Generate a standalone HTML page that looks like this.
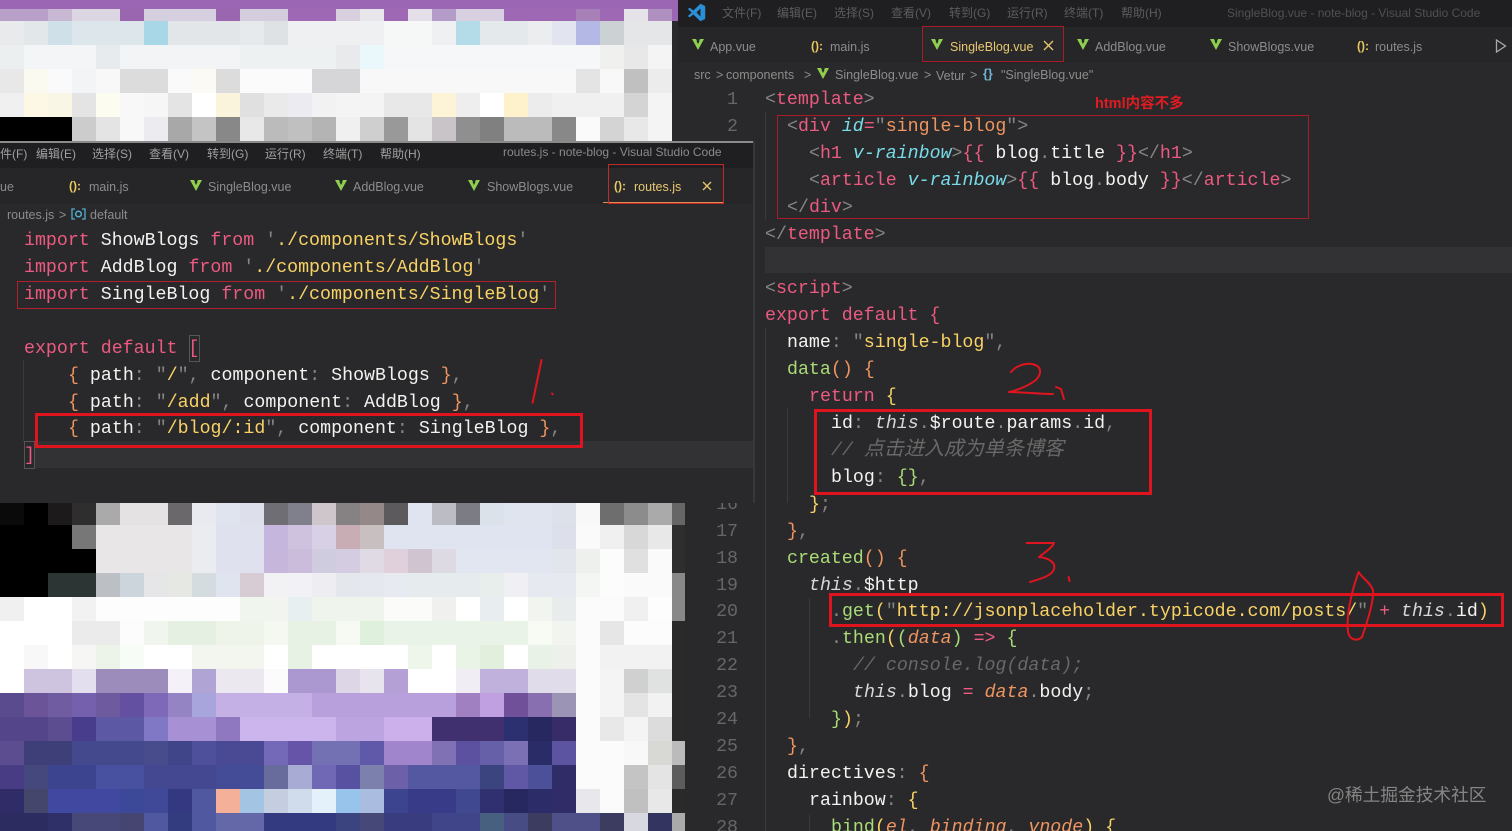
<!DOCTYPE html>
<html lang="zh"><head><meta charset="utf-8"><title>note-blog</title>
<style>
html,body{margin:0;padding:0;width:1512px;height:831px;overflow:hidden;background:#29292b}
#r{position:relative;width:1512px;height:831px;overflow:hidden;background:#29292b;filter:blur(.35px)}
.b{position:absolute}
.m{position:absolute;left:0}
.l{position:absolute;height:27px;margin-top:2px;line-height:27px;white-space:pre;font:18.27px/27px "Liberation Mono","Noto Sans CJK SC",monospace;color:#f2f2f0}
.u{position:absolute;margin-top:1px;white-space:pre;font:12.5px/18px "Liberation Sans","Noto Sans CJK SC",sans-serif;color:#8c8c8c}
.mn{font-size:12px;color:#5c5c5e}
.ml{font-size:12px;color:#a0a0a0}
.n{position:absolute;margin-top:2px;width:30px;left:708px;text-align:right;font:18.27px/27px "Liberation Mono",monospace;color:#666}
.p{color:#ec5a80}.y{color:#f8d264}.g{color:#858585}.o{color:#ee9560}.c{color:#78dce8;font-style:italic}.e{color:#a9dc76}.t{color:#686868;font-style:italic}.i{font-style:italic;color:#d8d8d8}.a{color:#ee9560;font-style:italic}
.z{font-size:20px;line-height:0;font-family:"Noto Sans CJK SC",sans-serif}
.j{position:absolute;margin-top:1px;white-space:pre;font:bold 12px/18px "Liberation Sans",sans-serif;color:#e8c860}
svg{position:absolute}
.gd{position:absolute;width:1px;background:#3a3a3c}
</style></head><body><div id="r">

<!-- right window chrome -->
<div class="b" style="left:678px;top:0;width:834px;height:27px;background:#1f1f21"></div>
<div class="b" style="left:678px;top:27px;width:834px;height:36px;background:#262628"></div>
<div class="b" style="left:923px;top:27px;width:140px;height:34px;background:#29292b"></div>
<svg style="left:687px;top:3px" width="19" height="19" viewBox="0 0 24 24"><path fill="#2b8fd8" d="M17 1l6 3v16l-6 3-9-8.5L3.500 18 1 16.500 6 12 1 7.500 3.500 6 8 9.500zM17 7l-5 5 5 5z"/></svg>
<div class="u mn" style="left:722px;top:3px">文件(F)</div>
<div class="u mn" style="left:777px;top:3px">编辑(E)</div>
<div class="u mn" style="left:834px;top:3px">选择(S)</div>
<div class="u mn" style="left:891px;top:3px">查看(V)</div>
<div class="u mn" style="left:949px;top:3px">转到(G)</div>
<div class="u mn" style="left:1007px;top:3px">运行(R)</div>
<div class="u mn" style="left:1064px;top:3px">终端(T)</div>
<div class="u mn" style="left:1121px;top:3px">帮助(H)</div>
<div class="u mn" style="left:1227px;top:3px;color:#505052">SingleBlog.vue - note-blog - Visual Studio Code</div>

<svg style="left:692px;top:39px" width="12" height="11" viewBox="0 0 12 11"><path fill="#8fcf4f" d="M0 0h4l2 4 2-4h4L6 11z"/><path fill="#262628" d="M4.500 2h3L6 5z"/></svg>
<div class="u" style="left:710px;top:37px">App.vue</div>
<div class="j" style="left:811px;top:36px">():</div>
<div class="u" style="left:830px;top:37px">main.js</div>
<svg style="left:931px;top:39px" width="12" height="11" viewBox="0 0 12 11"><path fill="#8fcf4f" d="M0 0h4l2 4 2-4h4L6 11z"/><path fill="#29292b" d="M4.500 2h3L6 5z"/></svg>
<div class="u" style="left:950px;top:37px;color:#e8c870">SingleBlog.vue</div>
<svg style="left:1043px;top:40px" width="11" height="11" viewBox="0 0 11 11"><path stroke="#e8c870" stroke-width="1.300" fill="none" d="M1 1l9 9M10 1l-9 9"/></svg>
<svg style="left:1077px;top:39px" width="12" height="11" viewBox="0 0 12 11"><path fill="#8fcf4f" d="M0 0h4l2 4 2-4h4L6 11z"/><path fill="#262628" d="M4.500 2h3L6 5z"/></svg>
<div class="u" style="left:1095px;top:37px">AddBlog.vue</div>
<svg style="left:1210px;top:39px" width="12" height="11" viewBox="0 0 12 11"><path fill="#8fcf4f" d="M0 0h4l2 4 2-4h4L6 11z"/><path fill="#262628" d="M4.500 2h3L6 5z"/></svg>
<div class="u" style="left:1228px;top:37px">ShowBlogs.vue</div>
<div class="j" style="left:1357px;top:36px">():</div>
<div class="u" style="left:1375px;top:37px">routes.js</div>
<svg style="left:1495px;top:39px" width="12" height="14" viewBox="0 0 12 14"><path stroke="#a8a8a8" stroke-width="1.300" fill="none" d="M1.500 1l9 6-9 6z"/></svg>

<div class="u" style="left:694px;top:65px">src</div>
<div class="u" style="left:716px;top:65px">&gt;</div>
<div class="u" style="left:726px;top:65px">components</div>
<div class="u" style="left:804px;top:65px">&gt;</div>
<svg style="left:817px;top:68px" width="12" height="11" viewBox="0 0 12 11"><path fill="#8fcf4f" d="M0 0h4l2 4 2-4h4L6 11z"/><path fill="#29292b" d="M4.500 2h3L6 5z"/></svg>
<div class="u" style="left:835px;top:65px">SingleBlog.vue</div>
<div class="u" style="left:924px;top:65px">&gt;</div>
<div class="u" style="left:936px;top:66px">Vetur</div>
<div class="u" style="left:970px;top:65px">&gt;</div>
<div class="u" style="left:983px;top:64px;color:#6fb8d8;font-weight:bold">{}</div>
<div class="u" style="left:1001px;top:65px">"SingleBlog.vue"</div>

<!-- right code -->
<div class="b" style="left:765px;top:247px;width:747px;height:26px;background:#323234"></div>
<div class="gd" style="left:765px;top:112px;height:108px"></div>
<div class="gd" style="left:765px;top:328px;height:503px"></div>
<div class="gd" style="left:787px;top:408px;height:95px"></div>
<div class="gd" style="left:809px;top:598px;height:120px"></div>
<div class="gd" style="left:809px;top:815px;height:16px"></div>

<div class="n" style="top:85px">1</div>
<div class="n" style="top:112px">2</div>
<div class="n" style="top:490px">16</div>
<div class="n" style="top:517px">17</div>
<div class="n" style="top:544px">18</div>
<div class="n" style="top:571px">19</div>
<div class="n" style="top:597px">20</div>
<div class="n" style="top:624px">21</div>
<div class="n" style="top:651px">22</div>
<div class="n" style="top:678px">23</div>
<div class="n" style="top:705px">24</div>
<div class="n" style="top:732px">25</div>
<div class="n" style="top:759px">26</div>
<div class="n" style="top:786px">27</div>
<div class="n" style="top:813px">28</div>

<div class="l" style="left:765px;top:85px"><span class="g">&lt;</span><span class="p">template</span><span class="g">&gt;</span></div>
<div class="l" style="left:787px;top:112px"><span class="g">&lt;</span><span class="p">div</span> <span class="c">id</span><span class="p">=</span><span class="g">"</span><span class="o">single-blog</span><span class="g">"&gt;</span></div>
<div class="l" style="left:809px;top:139px"><span class="g">&lt;</span><span class="p">h1</span> <span class="c">v-rainbow</span><span class="g">&gt;</span><span class="p">{{</span> blog<span class="g">.</span>title <span class="p">}}</span><span class="g">&lt;/</span><span class="p">h1</span><span class="g">&gt;</span></div>
<div class="l" style="left:809px;top:166px"><span class="g">&lt;</span><span class="p">article</span> <span class="c">v-rainbow</span><span class="g">&gt;</span><span class="p">{{</span> blog<span class="g">.</span>body <span class="p">}}</span><span class="g">&lt;/</span><span class="p">article</span><span class="g">&gt;</span></div>
<div class="l" style="left:787px;top:193px"><span class="g">&lt;/</span><span class="p">div</span><span class="g">&gt;</span></div>
<div class="l" style="left:765px;top:220px"><span class="g">&lt;/</span><span class="p">template</span><span class="g">&gt;</span></div>
<div class="l" style="left:765px;top:274px"><span class="g">&lt;</span><span class="p">script</span><span class="g">&gt;</span></div>
<div class="l" style="left:765px;top:301px"><span class="p">export default {</span></div>
<div class="l" style="left:787px;top:328px">name<span class="g">:</span> <span class="g">"</span><span class="y">single-blog</span><span class="g">",</span></div>
<div class="l" style="left:787px;top:355px"><span class="e">data</span><span class="o">()</span> <span class="o">{</span></div>
<div class="l" style="left:809px;top:382px"><span class="p">return</span> <span class="y">{</span></div>
<div class="l" style="left:831px;top:409px">id<span class="g">:</span> <span class="i">this</span><span class="g">.</span>$route<span class="g">.</span>params<span class="g">.</span>id<span class="g">,</span></div>
<div class="l t" style="left:831px;top:436px">// <span class="z">点击进入成为单条博客</span></div>
<div class="l" style="left:831px;top:463px">blog<span class="g">:</span> <span class="e">{}</span><span class="g">,</span></div>
<div class="l" style="left:809px;top:490px"><span class="y">}</span><span class="g">;</span></div>
<div class="l" style="left:787px;top:517px"><span class="o">}</span><span class="g">,</span></div>
<div class="l" style="left:787px;top:544px"><span class="e">created</span><span class="o">()</span> <span class="o">{</span></div>
<div class="l" style="left:809px;top:571px"><span class="i">this</span><span class="g">.</span>$http</div>
<div class="l" style="left:831px;top:597px"><span class="g">.</span><span class="e">get</span><span class="y">(</span><span class="g">"</span><span class="y">http://jsonplaceholder.typicode.com/posts/</span><span class="g">"</span> <span class="p">+</span> <span class="i">this</span><span class="g">.</span>id<span class="y">)</span></div>
<div class="l" style="left:831px;top:624px"><span class="g">.</span><span class="e">then</span><span class="y">(</span><span class="e">(</span><span class="a">data</span><span class="e">)</span> <span class="p">=&gt;</span> <span class="e">{</span></div>
<div class="l t" style="left:853px;top:651px">// console.log(data);</div>
<div class="l" style="left:853px;top:678px"><span class="i">this</span><span class="g">.</span>blog <span class="p">=</span> <span class="a">data</span><span class="g">.</span>body<span class="g">;</span></div>
<div class="l" style="left:831px;top:705px"><span class="e">}</span><span class="y">)</span><span class="g">;</span></div>
<div class="l" style="left:787px;top:732px"><span class="o">}</span><span class="g">,</span></div>
<div class="l" style="left:787px;top:759px">directives<span class="g">:</span> <span class="o">{</span></div>
<div class="l" style="left:809px;top:786px">rainbow<span class="g">:</span> <span class="y">{</span></div>
<div class="l" style="left:831px;top:813px"><span class="e">bind</span><span class="y">(</span><span class="a">el</span><span class="g">,</span> <span class="a">binding</span><span class="g">,</span> <span class="a">vnode</span><span class="y">)</span> <span class="y">{</span></div>

<!-- left window -->
<div class="b" style="left:0;top:141px;width:755px;height:362px;background:#29292b;border-right:2px solid #38383a;box-sizing:border-box"></div>
<div class="b" style="left:0;top:141px;width:753px;height:2px;background:#8a8a8c"></div>
<div class="b" style="left:0;top:143px;width:753px;height:25px;background:#1f1f21"></div>
<div class="b" style="left:0;top:168px;width:753px;height:36px;background:#262628"></div>
<div class="b" style="left:608px;top:168px;width:115px;height:35px;background:#29292b"></div>
<div class="b" style="left:603px;top:202px;width:120px;height:1px;background:#e08a50"></div>

<div class="u ml" style="left:0;top:144px">件(F)</div>
<div class="u ml" style="left:36px;top:144px">编辑(E)</div>
<div class="u ml" style="left:92px;top:144px">选择(S)</div>
<div class="u ml" style="left:149px;top:144px">查看(V)</div>
<div class="u ml" style="left:207px;top:144px">转到(G)</div>
<div class="u ml" style="left:265px;top:144px">运行(R)</div>
<div class="u ml" style="left:323px;top:144px">终端(T)</div>
<div class="u ml" style="left:380px;top:144px">帮助(H)</div>
<div class="u ml" style="left:503px;top:142px;color:#8a8a8a">routes.js - note-blog - Visual Studio Code</div>

<div class="u" style="left:0;top:177px">ue</div>
<div class="j" style="left:69px;top:176px">():</div>
<div class="u" style="left:89px;top:177px">main.js</div>
<svg style="left:190px;top:180px" width="12" height="11" viewBox="0 0 12 11"><path fill="#8fcf4f" d="M0 0h4l2 4 2-4h4L6 11z"/><path fill="#262628" d="M4.500 2h3L6 5z"/></svg>
<div class="u" style="left:208px;top:177px">SingleBlog.vue</div>
<svg style="left:335px;top:180px" width="12" height="11" viewBox="0 0 12 11"><path fill="#8fcf4f" d="M0 0h4l2 4 2-4h4L6 11z"/><path fill="#262628" d="M4.500 2h3L6 5z"/></svg>
<div class="u" style="left:353px;top:177px">AddBlog.vue</div>
<svg style="left:468px;top:180px" width="12" height="11" viewBox="0 0 12 11"><path fill="#8fcf4f" d="M0 0h4l2 4 2-4h4L6 11z"/><path fill="#262628" d="M4.500 2h3L6 5z"/></svg>
<div class="u" style="left:487px;top:177px">ShowBlogs.vue</div>
<div class="j" style="left:614px;top:176px">():</div>
<div class="u" style="left:634px;top:177px;color:#e8c870">routes.js</div>
<svg style="left:702px;top:181px" width="10" height="10" viewBox="0 0 10 10"><path stroke="#e8c870" stroke-width="1.300" fill="none" d="M1 1l8 8M9 1l-8 8"/></svg>

<div class="u" style="left:7px;top:205px">routes.js</div>
<div class="u" style="left:59px;top:205px">&gt;</div>
<svg style="left:71px;top:208px" width="15" height="12" viewBox="0 0 15 12"><path stroke="#4fb0d0" stroke-width="1.300" fill="none" d="M4 1H1v10h3M11 1h3v10h-3"/><circle cx="7.500" cy="6" r="2.800" fill="none" stroke="#4fb0d0" stroke-width="1.500"/></svg>
<div class="u" style="left:90px;top:205px">default</div>

<div class="b" style="left:35px;top:441px;width:718px;height:27px;background:#323234"></div>
<div class="gd" style="left:23px;top:360px;height:81px"></div>
<div class="b" style="left:189px;top:335px;width:9px;height:25px;border:1px solid #555"></div>
<div class="b" style="left:24px;top:441px;width:9px;height:26px;border:1px solid #555"></div>

<div class="l" style="left:24px;top:226px"><span class="p">import</span> ShowBlogs <span class="p">from</span> <span class="g">'</span><span class="y">./components/ShowBlogs</span><span class="g">'</span></div>
<div class="l" style="left:24px;top:253px"><span class="p">import</span> AddBlog <span class="p">from</span> <span class="g">'</span><span class="y">./components/AddBlog</span><span class="g">'</span></div>
<div class="l" style="left:24px;top:280px"><span class="p">import</span> SingleBlog <span class="p">from</span> <span class="g">'</span><span class="y">./components/SingleBlog</span><span class="g">'</span></div>
<div class="l" style="left:24px;top:334px"><span class="p">export default [</span></div>
<div class="l" style="left:68px;top:361px"><span class="o">{</span> path<span class="g">:</span> <span class="g">"</span><span class="y">/</span><span class="g">",</span> component<span class="g">:</span> ShowBlogs <span class="o">}</span><span class="g">,</span></div>
<div class="l" style="left:68px;top:388px"><span class="o">{</span> path<span class="g">:</span> <span class="g">"</span><span class="y">/add</span><span class="g">",</span> component<span class="g">:</span> AddBlog <span class="o">}</span><span class="g">,</span></div>
<div class="l" style="left:68px;top:414px"><span class="o">{</span> path<span class="g">:</span> <span class="g">"</span><span class="y">/blog/:id</span><span class="g">",</span> component<span class="g">:</span> SingleBlog <span class="o">}</span><span class="g">,</span></div>
<div class="l" style="left:24px;top:441px"><span class="p">]</span></div>

<!-- top mosaic -->
<div class="m" style="top:0;width:678px;height:21px;background:#9b66b4"></div>
<div class="m" style="top:9px;height:12px;width:672px;background:linear-gradient(90deg,#b8a0c8 48px,#c8b8d4 0 72px,#dcd6e2 0 120px,#9a66b0 0 144px,#d6cfdf 0 216px,#9a66b0 0 240px,#d4cddd 0 288px,#9e68b4 0 336px,#d8d0de 0 360px,#e8e6ea 0 384px,#9e68b4 0 408px,#e4dfe9 0 432px,#b49cc8 0 456px,#d8d0e0 0 504px,#9e68b4 0 576px,#a880b8 0 600px,#9e68b4 0 624px,#e6e2ea 0 648px,#b090c0 0)"></div>
<div class="m" style="top:21px;height:24px;width:672px;background:linear-gradient(90deg,#e8eaec 24px,#e2e8ea 0 48px,#cfe0e8 0 72px,#dde6ea 0 144px,#a8d8e8 0 168px,#e2e6e8 0 240px,#e6eaec 0 264px,#dfe2e4 0 288px,#eef0f1 0 384px,#f6f7f7 0 432px,#eef0f2 0 456px,#b4dce8 0 480px,#e4eaec 0 528px,#ebedee 0 552px,#e2e4f0 0 576px,#b4b8e4 0 600px,#ccd2d4 0 624px,#e4e6e8 0 672px)"></div>
<div class="m" style="top:45px;height:24px;width:672px;background:linear-gradient(90deg,#eceff0 24px,#f4f5f6 0 96px,#e8ebee 0 120px,#f2f4f5 0 240px,#eef1f2 0 336px,#e8eaec 0 360px,#eaf8fc 0 384px,#f6f7f8 0 600px,#f0f0ee 0 624px,#e8e8e8 0 648px,#f4f4f4 0)"></div>
<div class="m" style="top:69px;height:24px;width:672px;background:linear-gradient(90deg,#e8e8e8 24px,#fbfaf0 0 48px,#fafafa 0 72px,#f2f4f6 0 96px,#f8f8f8 0 120px,#dcdcdc 0 168px,#fafafa 0 192px,#fbfaf5 0 216px,#dcdcdc 0 240px,#fbfbfb 0 312px,#d6d6d8 0 360px,#f8f8f8 0 576px,#e4e4e4 0 600px,#f8f8f8 0 624px,#c0c0c0 0 648px,#ececec 0)"></div>
<div class="m" style="top:93px;height:24px;width:672px;background:linear-gradient(90deg,#f0f0f0 24px,#fdf8e6 0 48px,#faf6e6 0 72px,#e4e4e4 0 96px,#fdfcf0 0 120px,#f8f8f8 0 144px,#f6f6f6 0 168px,#e4e4e4 0 192px,#fff 0 216px,#fbf4dc 0 240px,#e0e0e0 0 264px,#eaeaea 0 288px,#ecebf2 0 312px,#f2f2f2 0 336px,#f4f4f4 0 384px,#e8e8e8 0 432px,#fdf4d8 0 456px,#eee 0 480px,#fff 0 504px,#fdf2cc 0 528px,#ececec 0 552px,#f0f0f0 0 624px,#d4d4d4 0 648px,#f4f4f4 0)"></div>
<div class="m" style="top:117px;height:24px;width:672px;background:linear-gradient(90deg,#000 72px,#ccc 0 96px,#e4e4e4 0 120px,#f8f8f8 0 144px,#ececf0 0 168px,#a8a8a8 0 192px,#c4c4c4 0 216px,#888 0 240px,#e8e8e8 0 264px,#bbb 0 288px,#c0c0c0 0 312px,#b4b4b4 0 336px,#f0f0f0 0 360px,#cfcfcf 0 384px,#999 0 408px,#e4e4e4 0 432px,#c8c4c8 0 456px,#8f8f8f 0 480px,#808080 0 504px,#bbb 0 552px,#888 0 576px,#fafafa 0 600px,#d4d4d4 0 624px,#e8e8e8 0 648px,#f4f4f4 0)"></div>

<!-- bottom mosaic -->
<div class="m" style="top:503px;height:22px;width:685px;background:linear-gradient(90deg,#0a0a0a 24px,#000 0 48px,#1c1a1a 0 72px,#2e2e2e 0 96px,#aaa 0 120px,#e4e2e2 0 168px,#6a686a 0 192px,#e8eaf0 0 216px,#e0e4ee 0 240px,#dde0ea 0 264px,#6e6e74 0 288px,#80808c 0 312px,#cfc6cc 0 336px,#868284 0 360px,#948888 0 384px,#5c5a5c 0 408px,#e0e4f0 0 432px,#bcbcc4 0 456px,#7c7c84 0 480px,#dce2ea 0 504px,#e0e4ee 0 552px,#dde2ea 0 576px,#f8f8f8 0 600px,#6e6e6e 0 624px,#8c8c8c 0 648px,#aaa 0 672px,#666 0)"></div>
<div class="m" style="top:525px;height:24px;width:685px;background:linear-gradient(90deg,#000 72px,#777 0 96px,#e8e6e6 0 192px,#eaecf0 0 216px,#dfe2ee 0 264px,#c4b6dc 0 288px,#cec2de 0 312px,#d8d0e4 0 336px,#c8aeb4 0 360px,#c8c0c0 0 384px,#e0e4f0 0 552px,#dde0ea 0 576px,#fafafa 0 600px,#f0f0f0 0 624px,#d8d8d8 0 648px,#e8e8e8 0 672px,#2e2e2e 0)"></div>
<div class="m" style="top:549px;height:24px;width:685px;background:linear-gradient(90deg,#000 96px,#e8e6e6 0 192px,#eaecf0 0 216px,#dfe2ee 0 264px,#c6b6dc 0 288px,#ccbcdc 0 312px,#d0cce0 0 336px,#d4cce0 0 360px,#e0dae4 0 384px,#e0d0dc 0 408px,#d0c4d0 0 432px,#dedae4 0 456px,#e2e6f0 0 552px,#e2e6ec 0 576px,#eef0ee 0 600px,#fcfcfc 0 624px,#e0e0e0 0 648px,#fafafa 0 672px,#2e2e2e 0)"></div>
<div class="m" style="top:573px;height:24px;width:685px;background:linear-gradient(90deg,#000 48px,#2c3434 0 96px,#bcc0c4 0 120px,#ccd4dc 0 144px,#e6e6e8 0 168px,#e6e8e4 0 192px,#d4dce0 0 216px,#dfe4ee 0 240px,#d8ccd4 0 264px,#f2f2f4 0 288px,#f2f2f6 0 312px,#eeeef2 0 336px,#e4e8ec 0 360px,#e6e8f0 0 384px,#e8eaf2 0 408px,#e6ecee 0 480px,#e8eeec 0 504px,#f0f0f4 0 528px,#e6eaf0 0 576px,#f4f6f4 0 600px,#fcfcfc 0 624px,#fafafa 0 672px,#888 0)"></div>
<div class="m" style="top:597px;height:24px;width:685px;background:linear-gradient(90deg,#f0f0f0 24px,#fff 0 72px,#f2f2f2 0 96px,#fdfdfd 0 240px,#f0f6ee 0 264px,#f2f4f0 0 288px,#e8eff0 0 312px,#eff5ec 0 384px,#fbfcfa 0 432px,#f0f0ee 0 456px,#fff 0 480px,#e8eef0 0 504px,#fff 0 528px,#f2f4f0 0 552px,#e8ecec 0 576px,#fbfbfb 0 624px,#f0f0f0 0 648px,#fdfdfd 0 672px,#888 0)"></div>
<div class="m" style="top:621px;height:24px;width:685px;background:linear-gradient(90deg,#fff 72px,#ebebeb 0 120px,#fcfcfc 0 144px,#f0f6ee 0 168px,#e6f0e2 0 216px,#eef4ea 0 264px,#f4f8f0 0 288px,#e8f2e4 0 336px,#f6faf2 0 360px,#dff0dc 0 384px,#eaf3e8 0 528px,#f8fbf4 0 552px,#f2f4f0 0 576px,#fbfbfb 0 600px,#e6e6e6 0 624px,#fcfcfc 0 672px,#2a2a2a 0)"></div>
<div class="m" style="top:645px;height:24px;width:685px;background:linear-gradient(90deg,#fff 24px,#f8f8f8 0 48px,#fff 0 72px,#f6f6f4 0 96px,#ecf4ea 0 120px,#f8fcf6 0 144px,#fff 0 192px,#f2f6ee 0 264px,#fff 0 288px,#e8f2e4 0 312px,#fff 0 408px,#eef6ec 0 432px,#fff 0 456px,#eaf4e6 0 480px,#e2efdc 0 504px,#fff 0 528px,#e8f2e6 0 552px,#eef0ec 0 576px,#fbfbfb 0 600px,#f2f2f2 0 672px,#2a2a2a 0)"></div>
<div class="m" style="top:669px;height:24px;width:685px;background:linear-gradient(90deg,#fff 24px,#cfc4e0 0 72px,#e4dfee 0 96px,#9c8cbc 0 168px,#f4f2f8 0 192px,#b0a4d4 0 216px,#ece8f0 0 264px,#fbfbfb 0 288px,#ac98d0 0 336px,#dcd6e6 0 360px,#e8e4ee 0 384px,#b4a0d4 0 408px,#fff 0 456px,#f0eef4 0 480px,#c0b0dc 0 528px,#e0dcea 0 576px,#fbfbfb 0 600px,#f4f4f4 0 624px,#d0d0d0 0 648px,#e0e2e2 0 672px,#2a2a2a 0)"></div>
<div class="m" style="top:693px;height:24px;width:685px;background:linear-gradient(90deg,#5a4a8e 24px,#6c5498 0 48px,#705ca0 0 72px,#7460ac 0 96px,#6e5a9e 0 120px,#6450a0 0 144px,#7e68b8 0 168px,#9484c4 0 192px,#a8a4dc 0 216px,#c4b0e4 0 312px,#b8a0dc 0 456px,#a080c0 0 480px,#c0a0e0 0 504px,#705098 0 528px,#8870b0 0 552px,#9c94b4 0 576px,#fbfbfb 0 600px,#f4f4f4 0 624px,#e4e4e4 0 648px,#f2f2f2 0 672px,#2a2a2a 0)"></div>
<div class="m" style="top:717px;height:24px;width:685px;background:linear-gradient(90deg,#54448a 48px,#5c4c90 0 72px,#483c8c 0 96px,#5c58a4 0 144px,#8078c4 0 168px,#a890d4 0 216px,#9078c0 0 240px,#ccb4ec 0 336px,#bca4e0 0 384px,#ccb0ec 0 432px,#403070 0 504px,#2c3070 0 528px,#282860 0 552px,#382c68 0 576px,#fbfbfb 0 600px,#e8e8e8 0 624px,#f4f4f4 0 648px,#dcdcdc 0 672px,#2a2a2a 0)"></div>
<div class="m" style="top:741px;height:24px;width:685px;background:linear-gradient(90deg,#5c4c90 24px,#3e3e78 0 72px,#44488c 0 144px,#484c8c 0 168px,#404488 0 192px,#4e509c 0 216px,#4a4a94 0 264px,#7468b8 0 288px,#6654a8 0 312px,#7470b4 0 360px,#6058a8 0 384px,#a084cc 0 432px,#8070b4 0 456px,#5c50a0 0 480px,#6660a8 0 504px,#7c70b4 0 528px,#2a2c68 0 552px,#5c54a0 0 576px,#fbfbfb 0 624px,#f8f8f8 0 648px,#d8d8d4 0 672px,#bbb 0)"></div>
<div class="m" style="top:765px;height:24px;width:685px;background:linear-gradient(90deg,#483c84 24px,#44487c 0 48px,#3c4490 0 96px,#4850a0 0 144px,#444890 0 216px,#444c98 0 264px,#686c9c 0 288px,#a8acd4 0 312px,#7068b4 0 336px,#5850a0 0 360px,#7c80ac 0 384px,#6c60a8 0 408px,#5458a0 0 480px,#3c4480 0 504px,#6058a4 0 528px,#4c5098 0 552px,#302c68 0 576px,#fbfbfb 0 624px,#c4c4c4 0 648px,#e4e4e4 0 672px,#5c5c5c 0)"></div>
<div class="m" style="top:789px;height:24px;width:685px;background:linear-gradient(90deg,#302c68 24px,#44466c 0 48px,#4048a0 0 120px,#3c4898 0 144px,#404898 0 168px,#343880 0 192px,#5058a0 0 216px,#f4b098 0 240px,#a4c4e4 0 264px,#c4cee0 0 288px,#d0dcec 0 312px,#e4f0fa 0 336px,#98c4ec 0 360px,#aabce0 0 384px,#3c4490 0 408px,#383c88 0 456px,#404890 0 480px,#303070 0 504px,#282860 0 528px,#2c2c68 0 552px,#302c68 0 576px,#e8e8ec 0 600px,#fbfbfb 0 624px,#c0c0c0 0 648px,#e8e8e8 0 672px,#2a2a2a 0)"></div>
<div class="m" style="top:813px;height:18px;width:685px;background:linear-gradient(90deg,#2c2c60 48px,#303068 0 72px,#484878 0 120px,#464470 0 144px,#5058a0 0 168px,#343c80 0 192px,#5058a0 0 216px,#6468a8 0 264px,#343a80 0 336px,#3c4480 0 360px,#464878 0 384px,#3a3c80 0 432px,#404488 0 480px,#486080 0 504px,#484c84 0 528px,#3c3c60 0 552px,#505088 0 600px,#3c3c60 0 624px,#d8d8e0 0 648px,#343460 0 672px,#aaa 0)"></div>

<!-- annotations -->
<svg style="left:0;top:0" width="1512" height="831" viewBox="0 0 1512 831" fill="none">
<rect x="17.500" y="281.500" width="538" height="27" stroke="#b0202c"/>
<rect x="777.500" y="115.500" width="531" height="103" stroke="#a81c28"/>
<rect x="922.500" y="26.500" width="141" height="35" stroke="#a81c28"/>
<rect x="608.500" y="164.500" width="115" height="39" stroke="#c02a2c"/>
<rect x="36.500" y="414.500" width="545" height="32" stroke="#e0141e" stroke-width="3"/>
<rect x="815.500" y="410.500" width="335" height="83" stroke="#e0141e" stroke-width="3"/>
<rect x="830.500" y="594.500" width="672" height="31" stroke="#e0141e" stroke-width="3"/>
<g stroke="#e0141e" stroke-width="2" stroke-linecap="round" stroke-linejoin="round">
<path d="M541.500 360L532.600 402.700"/><path d="M552 393.500l.8.800"/>
<path d="M1011 372C1016 366 1024 363 1032 364C1042 366 1042 373 1036 380C1028 386 1018 390 1009 392C1022 392 1040 394 1053 394"/><path d="M1056 387L1061 389L1064 399"/>
<path d="M1026.600 543L1054 543C1052 548 1044 553 1039 557C1048 558 1056 562 1054 569C1052 576 1040 579 1030 582"/><path d="M1068.600 577L1069.600 581"/>
<path d="M1358.600 572C1352 590 1346 615 1348 632C1350 641 1358 641 1362 637C1368 620 1374 600 1373 590C1370 582 1362 578 1358.600 572"/>
</g>
</svg>
<div class="u" style="left:1095px;top:95px;margin-top:0;font-size:14.500px;font-weight:bold;color:#e01c22">html内容不多</div>
<div class="u" style="left:1327px;top:783px;margin-top:0;font-size:17.700px;line-height:24px;color:#858585">@稀土掘金技术社区</div>
</div></body></html>
